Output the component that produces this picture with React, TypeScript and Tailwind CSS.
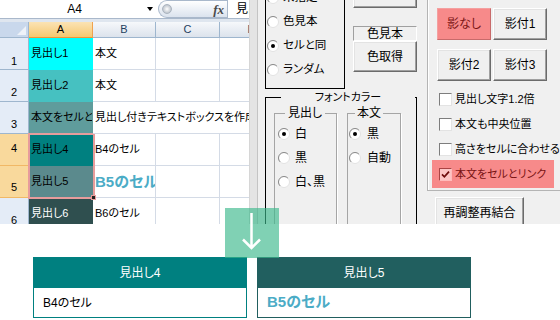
import type { FC, ReactNode } from 'react'

const jp = "font-['Liberation_Sans','Noto_Sans_CJK_JP',sans-serif] [font-feature-settings:'palt']"

type Row = {
    n: number
    a: string
    aCls: string
    b: string
    bCls?: string
    sel?: boolean
    numPb: string
    spill?: boolean
}

const rows: Row[] = [
    { n: 1, a: '見出し1', aCls: 'bg-[#00ffff]', b: '本文', numPb: 'pb-[2px]' },
    { n: 2, a: '見出し2', aCls: 'bg-[#46c1c1]', b: '本文', numPb: 'pb-[3px]' },
    { n: 3, a: '本文をセルとリンク', aCls: 'bg-[#5f9c9c]', b: '見出し付きテキストボックスを作成', numPb: 'pb-[3px]', spill: true },
    { n: 4, a: '見出し4', aCls: 'bg-[#008080]', b: 'B4のセル', sel: true, numPb: 'pb-[11px]' },
    { n: 5, a: '見出し5', aCls: 'bg-[#5b8a8d]', b: 'B5のセル', bCls: 'text-[15px] font-bold text-[#4bacc6]', sel: true, numPb: 'pb-[4px]' },
    { n: 6, a: '見出し6', aCls: 'bg-[#2f4f4f] text-white', b: 'B6のセル', numPb: 'pb-[3px]' },
]

const Sheet: FC = () => (
    <div className="relative h-[224px] w-[249px] shrink-0 overflow-hidden bg-white">
        {/* name box + formula bar */}
        <div className="flex h-[19px] border-b border-[#a9b8cb] bg-white">
            <div className="flex w-[158px] shrink-0 items-center">
                <span className="flex-1 pl-[2px] text-center text-[12px] leading-none">A4</span>
                <span className="mr-[5px] h-0 w-0 border-x-[3.5px] border-t-[4px] border-x-transparent border-t-black" />
            </div>
            <div className="flex h-[18px] w-[69px] shrink-0 items-center rounded-l-full border border-r-0 border-[#a9b8cb] bg-linear-to-b from-white to-[#dbe3ee]">
                <span className="ml-[3px] size-[10px] rounded-full border border-[#aab4c0] bg-radial from-white to-[#a7b0bb]" />
                <span className="ml-auto mr-[3px] font-['Liberation_Serif',serif] text-[13px] font-bold italic leading-none text-[#4a4a4a]">fx</span>
            </div>
            <div className="flex min-w-0 flex-1 items-center overflow-hidden whitespace-nowrap border-l border-[#a9b8cb] pl-[8px] text-[12px] leading-none">見出し4</div>
        </div>
        <div className="h-[3px] bg-[#dfe6ef]" />
        {/* grid */}
        <div className="grid w-[284px] grid-cols-[29px_64px_63px_64px_64px] grid-rows-[16px_repeat(6,32px)] text-[11px] leading-none">
            <div className="relative border-r border-b border-[#9eb6ce] bg-[#c9d8ec]">
                <span className="absolute right-[2px] bottom-[2px] h-0 w-0 border-b-[9px] border-l-[9px] border-b-[#eef2f8] border-l-transparent" />
            </div>
            <div className="flex items-center justify-center border-r border-b border-r-[#f0a24e] border-b-[#f29436] bg-linear-to-b from-[#fbe3b4] to-[#f5c86f] text-[11px]">A</div>
            {['B', 'C', 'D'].map((c) => (
                <div key={c} className="flex items-center justify-center border-r border-b border-[#9eb6ce] bg-linear-to-b from-[#f6f8fb] to-[#dce3ec] text-[11px] text-[#25405f]">
                    {c}
                </div>
            ))}
            {rows.map((r) => (
                <div key={r.n} className="contents">
                    <div
                        className={`flex items-end justify-center border-r border-b text-[11px] ${r.numPb} ${
                            r.sel ? 'border-r-[#f29436] border-b-[#f1b866] bg-[#f9d99c]' : 'border-[#9eb6ce] bg-[#e4ecf7]'
                        }`}>
                        {r.n}
                    </div>
                    <div className={`flex items-center overflow-hidden whitespace-nowrap border-r border-b border-transparent pl-[2px] ${r.aCls}`}>{r.a}</div>
                    <div
                        className={`flex items-center whitespace-nowrap border-b border-[#d4dbe6] pl-[2px] ${
                            r.spill ? 'relative z-10 overflow-visible' : 'overflow-hidden border-r'
                        } ${r.bCls ?? ''}`}>
                        {r.b}
                    </div>
                    <div className={`border-b border-[#d4dbe6] ${r.spill ? '' : 'border-r'}`} />
                    <div className="border-r border-b border-[#d4dbe6]" />
                </div>
            ))}
        </div>
        {/* selection A4:A5 */}
        <div className="absolute top-[133px] left-[28px] h-[66px] w-[67px] border-2 border-[#e79c9c]" />
        <div className="absolute top-[195px] left-[91px] size-[5px] border border-[#e79c9c] bg-[#222]" />
    </div>
)

const Radio: FC<{ checked?: boolean }> = ({ checked }) => (
    <svg width="12" height="12" viewBox="0 0 12 12" className="shrink-0">
        <circle cx="6" cy="6" r="5.5" fill="#fff" stroke="#e2e2e2" />
        <path d="M2.1 9.9 A5.5 5.5 0 0 1 9.9 2.1" fill="none" stroke="#8a8a8a" />
        {checked && <circle cx="6" cy="6" r="2" fill="#000" />}
    </svg>
)

const Check: FC<{ checked?: boolean; pink?: boolean }> = ({ checked, pink }) => (
    <span
        className={`flex size-[13px] shrink-0 items-center justify-center border ${
            pink ? 'border-[#a44] border-r-[#fbb] border-b-[#fbb] bg-[#fcc4c4]' : 'border-[#7d7d7d] border-r-[#e3e3e3] border-b-[#e3e3e3] bg-white'
        }`}>
        {checked && (
            <svg width="9" height="9" viewBox="0 0 9 9">
                <path d="M1 4.3 L3.4 6.8 L8 1.6" stroke="#6e0b0b" strokeWidth="1.7" fill="none" />
            </svg>
        )}
    </span>
)

const Btn: FC<{ children?: ReactNode; className?: string }> = ({ children, className = '' }) => (
    <div
        className={`flex items-center justify-center border border-t-white border-l-white border-r-[#6b6b6b] border-b-[#6b6b6b] bg-[#f0f0f0] shadow-[inset_-1px_-1px_0_#a0a0a0,inset_1px_1px_0_#e3e3e3] text-[12px] leading-none ${className}`}>
        {children}
    </div>
)

const Dialog: FC = () => (
    <div className="flex h-[224px] flex-1 overflow-hidden bg-[#f0f0f0] text-[12px] leading-none text-black">
        <div className="w-[9px] shrink-0 border-x border-l-[#d6d6d6] border-r-[#c4c4c4] bg-[#e4e4e4]" />
        <div className="flex gap-[10px] pl-[7px]">
            <div className="flex w-[152px] shrink-0 flex-col">
                <div className="mt-[-20px] flex h-[109px] shrink-0 gap-[8px]">
                    <div className="flex w-[80px] flex-col border border-black pt-[5px]">
                        {[
                            { t: '未指定' },
                            { t: '色見本' },
                            { t: 'セルと同', c: true },
                            { t: 'ランダム' },
                        ].map((o) => (
                            <div key={o.t} className="flex h-[24px] items-center gap-[4px] pl-[1px]">
                                <Radio checked={o.c} />
                                <span className="text-[11.5px]">{o.t}</span>
                            </div>
                        ))}
                    </div>
                    <div className="flex w-[64px] flex-col">
                        <Btn className="h-[28px]" />
                        <div className="mt-[18px] flex h-[15px] items-center justify-center border border-[#a0a0a0] border-r-white border-b-white">色見本</div>
                        <Btn className="h-[31px]">色取得</Btn>
                    </div>
                </div>
                <fieldset className="h-[160px] shrink-0 border border-black">
                    <legend className="ml-[7px] w-[134px] text-center text-[11px] leading-[16px]">フォントカラー</legend>
                    <div className="flex gap-[10px] pl-[8px]">
                        <fieldset className="h-[140px] w-[63px] border border-[#a5a5a5] shadow-[1px_1px_0_#fff]">
                            <legend className="ml-[10px] px-[3px] leading-[16px]">見出し</legend>
                            <div className="flex flex-col pt-[1px]">
                                {[
                                    { t: '白', c: true },
                                    { t: '黒' },
                                    { t: '白、黒' },
                                ].map((o) => (
                                    <div key={o.t} className="flex h-[24px] items-center gap-[5px] pl-[3px]">
                                        <Radio checked={o.c} />
                                        <span>{o.t}</span>
                                    </div>
                                ))}
                            </div>
                        </fieldset>
                        <fieldset className="h-[140px] w-[54px] border border-[#a5a5a5] shadow-[1px_1px_0_#fff]">
                            <legend className="ml-[7px] px-[2px] leading-[16px]">本文</legend>
                            <div className="flex flex-col pt-[1px]">
                                {[{ t: '黒', c: true }, { t: '自動' }].map((o) => (
                                    <div key={o.t} className="flex h-[24px] items-center gap-[6px] pl-[1px]">
                                        <Radio checked={o.c} />
                                        <span>{o.t}</span>
                                    </div>
                                ))}
                            </div>
                        </fieldset>
                    </div>
                </fieldset>
            </div>
            <div className="flex w-[150px] shrink-0 flex-col">
                <div className="mt-[-20px] flex h-[211px] shrink-0 flex-col border border-[#b4b4b4] pt-[27px] shadow-[inset_1px_0_0_#fff]">
                    <div className="grid grid-cols-[54px_54px] gap-x-[2px] gap-y-[9px] pl-[9px]">
                        <div className="flex h-[32px] items-center justify-center border border-[#f4a0a0] border-r-[#c86a6a] border-b-[#c86a6a] bg-[#f78a8a] text-[#7a1414]">
                            影なし
                        </div>
                        <Btn className="h-[32px]">影付1</Btn>
                        <Btn className="h-[32px]">影付2</Btn>
                        <Btn className="h-[32px]">影付3</Btn>
                    </div>
                    <div className="mt-[6px] flex flex-col text-[11px]">
                        {['見出し文字1.2倍', '本文も中央位置', '高さをセルに合わせる'].map((t) => (
                            <div key={t} className="flex h-[25px] items-center gap-[3px] whitespace-nowrap pl-[11px]">
                                <Check />
                                <span>{t}</span>
                            </div>
                        ))}
                        <div className="mt-[-2px] ml-[4px] flex h-[28px] w-[122px] items-center gap-[3px] whitespace-nowrap bg-[#f78a8a] pl-[7px] text-[#7a1414]">
                            <Check checked pink />
                            <span>本文をセルとリンク</span>
                        </div>
                    </div>
                </div>
                <Btn className="mt-[6px] ml-[8px] h-[31px] w-[89px] shrink-0">再調整再結合</Btn>
            </div>
        </div>
    </div>
)

const Card: FC<{ title: string; tone: 'teal' | 'dark'; children: ReactNode }> = ({ title, tone, children }) => (
    <div className={`w-[214px] border ${tone === 'teal' ? 'border-[#008080]' : 'border-[#215f5f]'}`}>
        <div className={`flex h-[30px] items-center justify-center text-[12px] text-white ${tone === 'teal' ? 'bg-[#008080]' : 'bg-[#215f5f]'}`}>{title}</div>
        <div className="flex h-[29px] items-center bg-white pl-[9px]">{children}</div>
    </div>
)

export default function App() {
    return (
        <div className={`relative h-[320px] w-[560px] overflow-hidden bg-white text-black ${jp}`}>
            <div className="flex h-[224px]">
                <Sheet />
                <Dialog />
            </div>
            <div className="flex gap-[10px] pt-[33px] pl-[33px]">
                <Card title="見出し4" tone="teal">
                    <span className="text-[12px]">B4のセル</span>
                </Card>
                <Card title="見出し5" tone="dark">
                    <span className="text-[15px] font-bold text-[#4bacc6]">B5のセル</span>
                </Card>
            </div>
            {/* down arrow badge */}
            <div className="absolute top-[208px] left-[225px] h-[50px] w-[54px] bg-[rgba(60,185,140,0.65)]">
                <svg width="54" height="50" viewBox="0 0 54 50">
                    <path d="M26.5 5 V40 M18 31.5 L26.5 40 L35 31.5" stroke="#fff" strokeWidth="2.5" fill="none" />
                </svg>
            </div>
        </div>
    )
}
